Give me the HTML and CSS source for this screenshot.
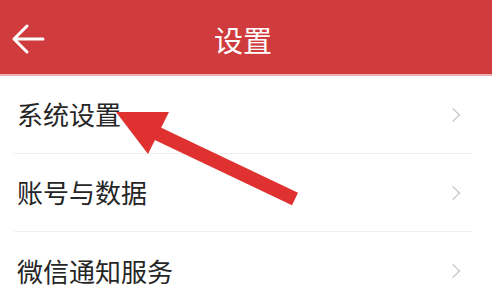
FILE: index.html
```html
<!DOCTYPE html>
<html lang="zh">
<head>
<meta charset="utf-8">
<link rel="stylesheet" href="styles.css">
</head>
<body>
<div class="page">
  <header class="topbar">
    <svg class="back" width="34" height="32" viewBox="0 0 34 32">
      <path d="M3 16 H32 M16 3 L3 16 L16 29" fill="none" stroke="#fff" stroke-width="3" stroke-linecap="round" stroke-linejoin="round"/>
    </svg>
    <h1 class="title">设置</h1>
  </header>
  <ul class="list">
    <li class="row"><span>系统设置</span><span class="chev"></span></li>
    <li class="row"><span>账号与数据</span><span class="chev"></span></li>
    <li class="row"><span>微信通知服务</span><span class="chev"></span></li>
  </ul>
  <svg class="annot" width="492" height="308" viewBox="0 0 492 308">
    <line x1="152" y1="131" x2="295" y2="199" stroke="#de3130" stroke-width="14"/>
    <polygon points="116,112 169,112 148,154" fill="#de3130"/>
  </svg>
</div>
</body>
</html>
```

FILE: styles.css
```css
html, body {
  margin: 0;
  padding: 0;
  background: #fff;
}
body {
  width: 492px;
  height: 308px;
  overflow: hidden;
  font-family: "Noto Sans CJK SC", "Noto Sans", sans-serif;
}
.page {
  position: relative;
  width: 492px;
  height: 308px;
}
.topbar {
  height: 76px;
  background: #d03c3d;
  border-bottom: 2px solid #eab3b3;
  position: relative;
  display: flex;
  align-items: center;
  justify-content: center;
  padding-top: 4px;
  box-sizing: border-box;
}
.back {
  position: absolute;
  left: 11px;
  top: 23px;
}
.title {
  margin: 0 0 0 -6px;
  font-weight: 400;
  font-size: 29px;
  color: #fff;
  line-height: 1;
}
.list {
  list-style: none;
  margin: 0;
  padding: 0;
}
.row {
  height: 78px;
  margin: 0 20px 0 14px;
  padding-left: 3px;
  display: flex;
  align-items: center;
  justify-content: space-between;
  border-bottom: 1px solid #efefef;
  font-size: 26px;
  color: #262626;
  box-sizing: border-box;
}
.row:last-child {
  border-bottom: none;
}
.row span:first-child {
  margin-top: -2px;
}
.chev {
  width: 9px;
  height: 9px;
  border-top: 1.5px solid #bcbcbc;
  border-right: 1.5px solid #bcbcbc;
  transform: rotate(45deg);
  margin-right: 14px;
}
.annot {
  position: absolute;
  left: 0;
  top: 0;
  pointer-events: none;
}
```
